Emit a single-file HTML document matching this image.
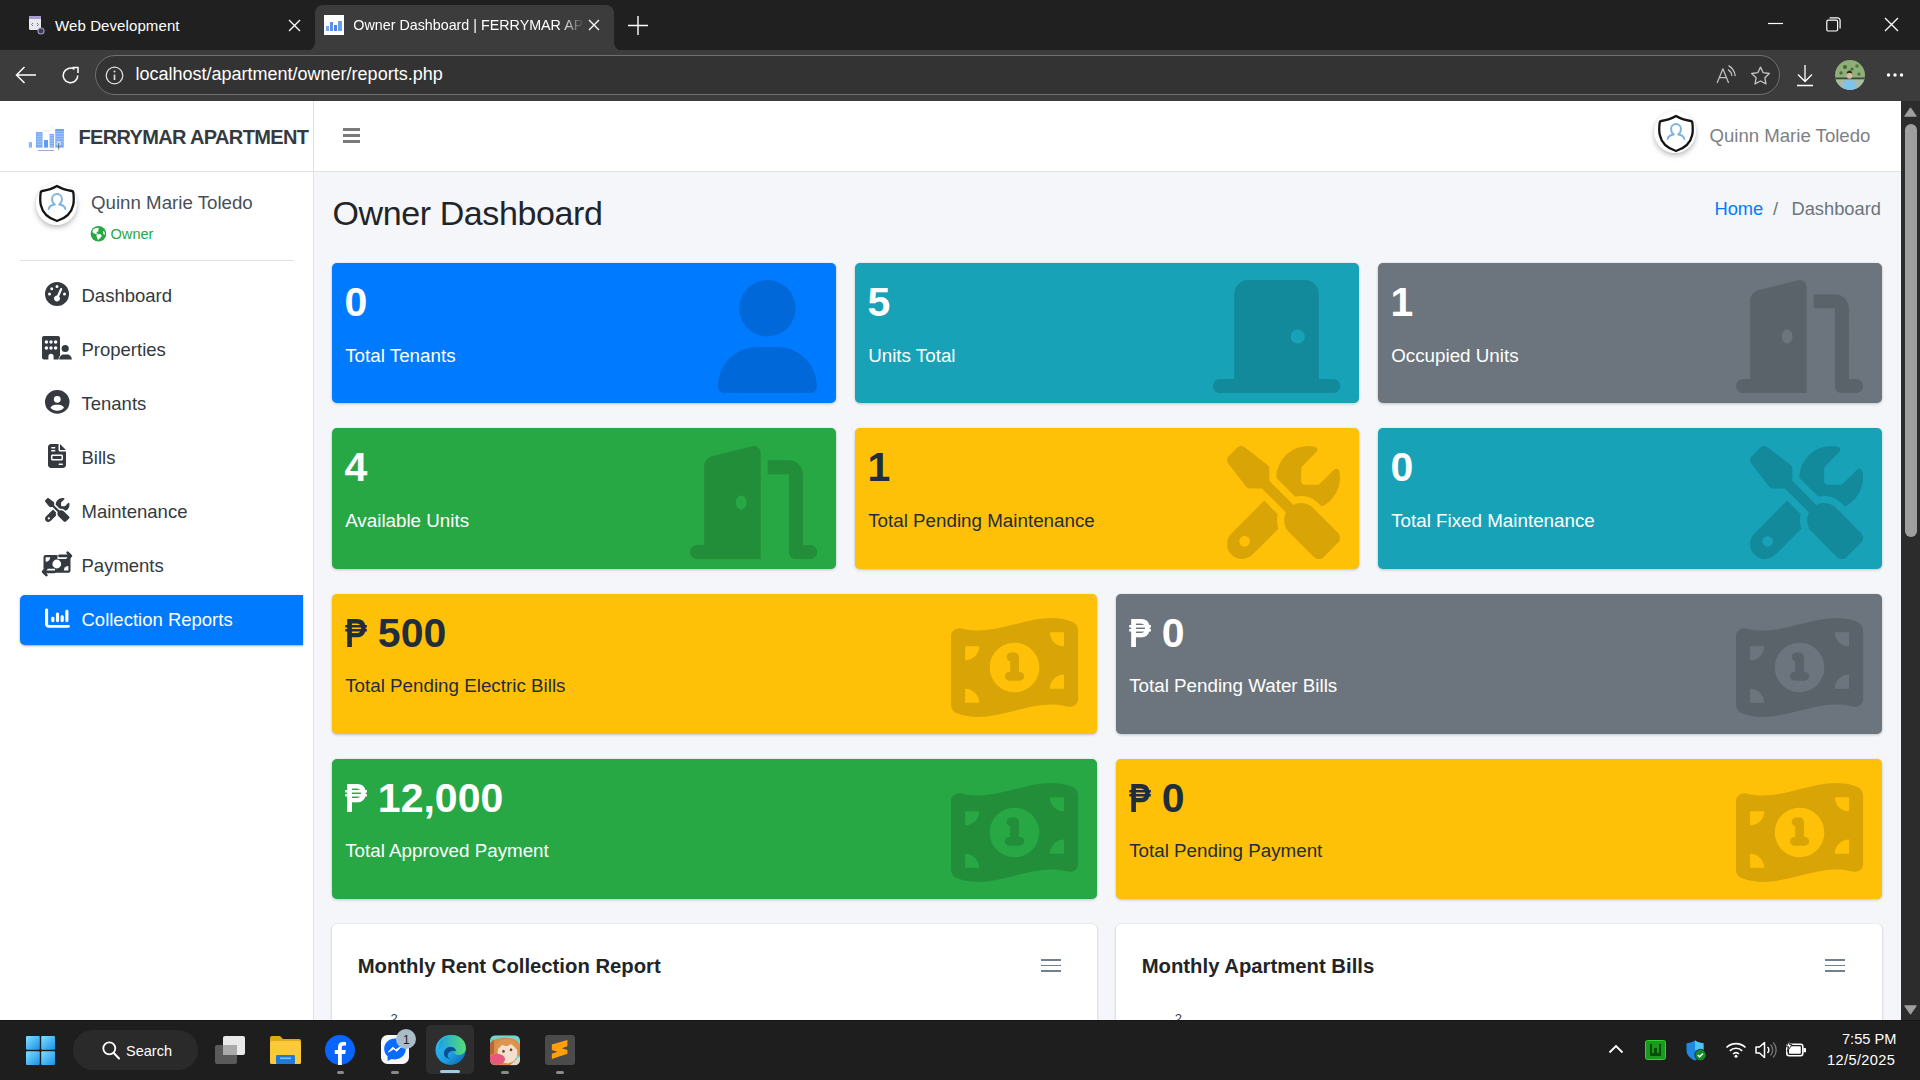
<!DOCTYPE html><html><head><meta charset="utf-8"><title>Owner Dashboard | FERRYMAR APARTMENT</title><style>
*{margin:0;padding:0;box-sizing:border-box}
html,body{width:1920px;height:1080px;overflow:hidden;background:#f4f6f9}
body{position:relative;font-family:"Liberation Sans",sans-serif}
.t{position:absolute;line-height:1;white-space:nowrap}
.ic{position:absolute;overflow:visible}
.peso{display:inline-block;transform:scaleX(.8);transform-origin:0 0;margin-right:-5.5px}
#tabstrip{position:absolute;left:0;top:0;width:1920px;height:50px;background:#202020}
#toolbar{position:absolute;left:0;top:50px;width:1920px;height:51px;background:#3c3c3c}
#acttab{position:absolute;left:315px;top:5px;width:299px;height:46px;background:#3c3c3c;border-radius:8px 8px 0 0}
#acttab:before,#acttab:after{content:"";position:absolute;bottom:0;width:8px;height:8px;background:radial-gradient(circle at 0 0,transparent 8px,#3c3c3c 8.5px)}
#acttab:before{left:-8px;background:radial-gradient(circle at 0 0,transparent 7.5px,#3c3c3c 8px)}
#acttab:after{right:-8px;background:radial-gradient(circle at 100% 0,transparent 7.5px,#3c3c3c 8px)}
#addr{position:absolute;left:95px;top:55px;width:1685px;height:40px;border-radius:20px;background:#333333;border:1px solid #707070}
#header{position:absolute;left:0;top:101px;width:1901px;height:71px;background:#fff;border-bottom:1px solid #dee2e6}
#sidebar{position:absolute;left:0;top:172px;width:314px;height:848px;background:#fff;border-right:1px solid #dee2e6}
#page{position:absolute;left:0;top:101px;width:1901px;height:919px;background:#f4f6f9}
.av{position:absolute;border-radius:50%;background:#fff;box-shadow:0 3px 6px rgba(0,0,0,.12),0 2px 4px rgba(0,0,0,.16)}
.box{position:absolute;border-radius:5px;box-shadow:0 0 1px rgba(0,0,0,.125),0 1px 3px rgba(0,0,0,.2)}
.card{position:absolute;border-radius:5px;background:#fff;box-shadow:0 0 1px rgba(0,0,0,.125),0 1px 3px rgba(0,0,0,.2)}
#sbar{position:absolute;left:1901px;top:101px;width:19px;height:919px;background:#2c2c2c}
#taskbar{position:absolute;left:0;top:1020px;width:1920px;height:60px;background:#1e1e1e;border-top:1px solid #171717}
</style></head><body><div id="tabstrip"></div>
<div id="toolbar"></div>
<div id="acttab"></div>
<svg class="ic" style="left:28px;top:15px;width:16px;height:20px" viewBox="0 0 16 20"><rect x="1" y="1" width="12" height="14" rx="1.5" fill="#e8e8ef"/><rect x="1" y="1" width="12" height="3" fill="#a79bd0"/><path d="M5 8l-1.5 1.5L5 11M9 8l1.5 1.5L9 11" stroke="#777" stroke-width="1" fill="none"/><circle cx="13" cy="16" r="3" fill="#3d3d50" stroke="#9a93c8" stroke-width="1.2"/></svg>
<div class="t" style="left:55.00px;top:17.80px;font-size:15px;color:#ffffff;letter-spacing:0.1px;">Web Development</div>
<svg class="ic" style="left:288px;top:19px;width:13px;height:13px" viewBox="0 0 13 13"><path d="M1 1L12 12M12 1L1 12" stroke="#fff" stroke-width="1.3"/></svg>
<div style="position:absolute;left:324px;top:15px;width:20px;height:20px;background:#fff"></div>
<svg class="ic" style="left:325px;top:18px;width:18px;height:14px" viewBox="0 0 18 14"><rect x="1" y="8" width="3" height="5" fill="#7aa7f0"/><rect x="5" y="4" width="3" height="9" fill="#5b90ec"/><rect x="9" y="7" width="3" height="6" fill="#4a86ea"/><rect x="13" y="3" width="4" height="10" fill="#6b9cef"/></svg>
<div class="t" style="left:353.3px;top:18.4px;font-size:14.3px;color:#fff;width:231px;overflow:hidden;-webkit-mask-image:linear-gradient(90deg,#000 0,#000 208px,transparent 231px);mask-image:linear-gradient(90deg,#000 0,#000 208px,transparent 231px)">Owner Dashboard | FERRYMAR APARTMENT</div>
<svg class="ic" style="left:588px;top:19px;width:12px;height:12px" viewBox="0 0 12 12"><path d="M1 1L11 11M11 1L1 11" stroke="#fff" stroke-width="1.3"/></svg>
<svg class="ic" style="left:628px;top:16px;width:20px;height:19px" viewBox="0 0 20 19"><path d="M10 0V19M0 9.5H20" stroke="#fff" stroke-width="1.4"/></svg>
<svg class="ic" style="left:1768px;top:22px;width:15px;height:3px" viewBox="0 0 15 3"><path d="M0 1.5H15" stroke="#fff" stroke-width="1.2"/></svg>
<svg class="ic" style="left:1826px;top:17px;width:15px;height:15px" viewBox="0 0 15 15"><rect x="0.8" y="3.2" width="10.8" height="10.8" rx="1.5" fill="none" stroke="#fff" stroke-width="1.2"/><path d="M3.5 0.8H11.5a2.6 2.6 0 0 1 2.6 2.6V11.5" fill="none" stroke="#fff" stroke-width="1.2"/></svg>
<svg class="ic" style="left:1884px;top:17px;width:15px;height:15px" viewBox="0 0 15 15"><path d="M1 1L14 14M14 1L1 14" stroke="#fff" stroke-width="1.3"/></svg>
<svg class="ic" style="left:15px;top:66px;width:22px;height:18px" viewBox="0 0 22 18"><path d="M21 9H1.5M9.5 1L1.5 9L9.5 17" fill="none" stroke="#fff" stroke-width="1.5"/></svg>
<svg class="ic" style="left:61px;top:66px;width:19px;height:19px" viewBox="0 0 19 19"><path d="M16.8 9.5A7.3 7.3 0 1 1 13.5 3.3" fill="none" stroke="#fff" stroke-width="1.5"/><path d="M11.5 1.5H17V7" fill="none" stroke="#fff" stroke-width="1.5"/></svg>
<div id="addr"></div>
<svg class="ic" style="left:105px;top:66px;width:19px;height:19px" viewBox="0 0 19 19"><circle cx="9.5" cy="9.5" r="8.3" fill="none" stroke="#ddd" stroke-width="1.3"/><path d="M9.5 8.5V14" stroke="#ddd" stroke-width="1.6"/><circle cx="9.5" cy="5.6" r="1" fill="#ddd"/></svg>
<div class="t" style="left:135.50px;top:65.46px;font-size:18px;color:#ffffff;">localhost/apartment/owner/reports.php</div>
<svg class="ic" style="left:1712px;top:62px;width:26px;height:24px" viewBox="1712 62 26 24"><path d="M1717.1 83L1722.9 68.8L1728.6 83M1719.3 77.6H1726.5" fill="none" stroke="#c2c2c2" stroke-width="1.25" stroke-linejoin="round"/><path d="M1728.4 69.9Q1731.2 71.6 1731.8 75.3M1728.9 65.9Q1734.2 69 1735.2 75.6" fill="none" stroke="#c2c2c2" stroke-width="1.25" stroke-linecap="round"/></svg>
<svg class="ic" style="left:1748px;top:64px;width:25px;height:23px" viewBox="1748 64 25 23"><path d="M1760.50 67.10 L1763.20 72.68 L1769.34 73.53 L1764.87 77.82 L1765.97 83.92 L1760.50 81.00 L1755.03 83.92 L1756.13 77.82 L1751.66 73.53 L1757.80 72.68z" fill="none" stroke="#c2c2c2" stroke-width="1.35" stroke-linejoin="round"/></svg>
<svg class="ic" style="left:1796px;top:64px;width:18px;height:23px" viewBox="0 0 18 23"><path d="M9 1V17M2 10.5L9 17.5L16 10.5M1 21.5H17" fill="none" stroke="#fff" stroke-width="1.3"/></svg>
<svg class="ic" style="left:1835px;top:60px;width:30px;height:30px" viewBox="0 0 30 30"><defs><clipPath id="pc"><circle cx="15" cy="15" r="15"/></clipPath></defs><g clip-path="url(#pc)"><rect width="30" height="30" fill="#8fae78"/><circle cx="10" cy="7" r="2" fill="#3f6a35"/><circle cx="17" cy="9" r="1.6" fill="#46703a"/><circle cx="22" cy="6" r="1.8" fill="#527a40"/><circle cx="6" cy="13" r="1.7" fill="#4a7040"/><circle cx="24" cy="14" r="1.6" fill="#4a7040"/><rect x="0" y="17.5" width="30" height="2" fill="#3b4a3c"/><rect x="0" y="19.5" width="30" height="11" fill="#a8bca8"/><path d="M7 30C7 23 10 20 14.5 20S22 23 22 30z" fill="#7fc3ea"/><ellipse cx="14.5" cy="15.5" rx="2.8" ry="3.2" fill="#d9b9a4"/><path d="M11.7 14C11.8 11.6 13 10.6 14.6 10.6S17.3 11.6 17.3 13.6C16.2 12.6 13.2 12.6 11.7 14z" fill="#3a2e28"/></g></svg>
<svg class="ic" style="left:1886px;top:72px;width:18px;height:6px" viewBox="0 0 18 6"><circle cx="2.5" cy="3" r="1.7" fill="#fff"/><circle cx="9" cy="3" r="1.7" fill="#fff"/><circle cx="15.5" cy="3" r="1.7" fill="#fff"/></svg>
<div id="page">
</div>
<div id="header"></div>
<div id="sidebar"></div>
<div style="position:absolute;left:313px;top:101px;width:1px;height:71px;background:#dee2e6"></div>
<svg class="ic" style="left:24px;top:126px;width:44px;height:28px" viewBox="0 0 44 28"><rect x="4.8" y="16.2" width="3.2" height="5.4" fill="#7fb0f7"/><rect x="5.6" y="17.40" width="1.6" height="1.1" fill="#a9cbfa"/><rect x="5.6" y="20.00" width="1.6" height="1.1" fill="#a9cbfa"/><rect x="12" y="6" width="6.5" height="15.6" fill="#78aaf6"/><rect x="12.8" y="7.20" width="4.9" height="1.1" fill="#a6c8fa"/><rect x="12.8" y="9.80" width="4.9" height="1.1" fill="#a6c8fa"/><rect x="12.8" y="12.40" width="4.9" height="1.1" fill="#a6c8fa"/><rect x="12.8" y="15.00" width="4.9" height="1.1" fill="#a6c8fa"/><rect x="12.8" y="17.60" width="4.9" height="1.1" fill="#a6c8fa"/><rect x="20" y="14" width="4" height="7.6" fill="#5c9ef7"/><rect x="25.6" y="7.9" width="4.4" height="13.7" fill="#7aabf6"/><rect x="26.400000000000002" y="9.10" width="2.8000000000000003" height="1.1" fill="#a8c9fa"/><rect x="26.400000000000002" y="11.70" width="2.8000000000000003" height="1.1" fill="#a8c9fa"/><rect x="26.400000000000002" y="14.30" width="2.8000000000000003" height="1.1" fill="#a8c9fa"/><rect x="26.400000000000002" y="16.90" width="2.8000000000000003" height="1.1" fill="#a8c9fa"/><rect x="26.400000000000002" y="19.50" width="2.8000000000000003" height="1.1" fill="#a8c9fa"/><rect x="31.3" y="3.3" width="8.5" height="18.3" fill="#76a8f6"/><rect x="32.1" y="4.50" width="6.9" height="1.1" fill="#a4c6fa"/><rect x="32.1" y="7.10" width="6.9" height="1.1" fill="#a4c6fa"/><rect x="32.1" y="9.70" width="6.9" height="1.1" fill="#a4c6fa"/><rect x="32.1" y="12.30" width="6.9" height="1.1" fill="#a4c6fa"/><rect x="32.1" y="14.90" width="6.9" height="1.1" fill="#a4c6fa"/><rect x="32.1" y="17.50" width="6.9" height="1.1" fill="#a4c6fa"/><rect x="31.3" y="3.3" width="8.5" height="1.4" fill="#5d97ee"/><circle cx="34.8" cy="17.5" r="2.2" fill="#cfe1fc"/><rect x="34.3" y="17" width="0.9" height="6.5" fill="#4a5a78"/><rect x="14" y="24" width="16" height="0.9" fill="#8da3c4"/><path d="M27 2.5L29.5 0.3" stroke="#ddd" stroke-width="0.6"/><rect x="19" y="4.3" width="7" height="1" fill="#e6e9ee"/></svg>
<div class="t" style="left:78.50px;top:127.27px;font-size:20px;color:#343a40;font-weight:700;letter-spacing:-0.65px;">FERRYMAR APARTMENT</div>
<div style="position:absolute;left:343px;top:128px;width:17px;height:2.5px;background:#7a7a7a"></div>
<div style="position:absolute;left:343px;top:134.2px;width:17px;height:2.5px;background:#7a7a7a"></div>
<div style="position:absolute;left:343px;top:140.4px;width:17px;height:2.5px;background:#7a7a7a"></div>
<div class="av" style="left:1654.3px;top:111px;width:42px;height:42px"></div><svg class="ic" style="left:1657.6px;top:114.8px;width:36px;height:37px" viewBox="0 0 36 37"><path d="M18 1C14 3.4 9.5 5 3.2 6Q1.6 6.3 1.6 8C1.2 12 0.8 16 1.8 20C3.5 28 10 33.5 18 36C26 33.5 32.5 28 34.2 20C35.2 16 34.8 12 34.4 8Q34.4 6.3 32.8 6C26.5 5 22 3.4 18 1z" fill="#fff" stroke="#141414" stroke-width="2.3" stroke-linejoin="round"/><path d="M9.6 24C10.4 21 12.5 19.8 15.8 19.5C13.8 18.2 13.1 16.2 13.1 13.9A4.9 4.9 0 0 1 22.9 13.9C22.9 16.2 22.2 18.2 20.2 19.5C23.5 19.8 25.6 21 26.4 24" fill="none" stroke="#7db4de" stroke-width="1.9" stroke-linecap="round" stroke-linejoin="round"/></svg>
<div class="t" style="left:1709.50px;top:127.05px;font-size:18.6px;color:#7d8185;">Quinn Marie Toledo</div>
<div class="av" style="left:35.8px;top:183px;width:41.5px;height:41.5px"></div><svg class="ic" style="left:39.099999999999994px;top:184.7px;width:36px;height:37px" viewBox="0 0 36 37"><path d="M18 1C14 3.4 9.5 5 3.2 6Q1.6 6.3 1.6 8C1.2 12 0.8 16 1.8 20C3.5 28 10 33.5 18 36C26 33.5 32.5 28 34.2 20C35.2 16 34.8 12 34.4 8Q34.4 6.3 32.8 6C26.5 5 22 3.4 18 1z" fill="#fff" stroke="#141414" stroke-width="2.3" stroke-linejoin="round"/><path d="M9.6 24C10.4 21 12.5 19.8 15.8 19.5C13.8 18.2 13.1 16.2 13.1 13.9A4.9 4.9 0 0 1 22.9 13.9C22.9 16.2 22.2 18.2 20.2 19.5C23.5 19.8 25.6 21 26.4 24" fill="none" stroke="#7db4de" stroke-width="1.9" stroke-linecap="round" stroke-linejoin="round"/></svg>
<div class="t" style="left:91.00px;top:194.17px;font-size:18.7px;color:#495057;">Quinn Marie Toledo</div>
<svg class="ic" style="left:86px;top:222px;width:24px;height:24px" viewBox="0 0 1080 1080"><circle cx="560" cy="532" r="350" fill="#28a745"/><path d="M290 450L320 340L440 265L580 255L555 330L560 420L460 460L540 520L420 545L330 500z" fill="#fff"/><path d="M470 560L640 540L700 600L690 680L610 745L565 800L520 780L490 690L470 620z" fill="#fff"/><ellipse cx="805" cy="490" rx="38" ry="90" transform="rotate(-12 805 490)" fill="#fff"/></svg>
<div class="t" style="left:110.50px;top:227.44px;font-size:14.6px;color:#28a745;">Owner</div>
<div style="position:absolute;left:20px;top:260px;width:274px;height:1px;background:#dee2e6"></div>
<svg class="ic" style="left:45.00px;top:282.00px;width:24.00px;height:24.00px;" viewBox="0 0 512 512" fill="#343a40" color="#343a40" preserveAspectRatio="none"><path d="M0 256a256 256 0 1 1 512 0A256 256 0 1 1 0 256zM288 96a32 32 0 1 0 -64 0 32 32 0 1 0 64 0zM256 416c35.3 0 64-28.7 64-64c0-17.4-6.9-33.1-18.1-44.6L366 161.7c5.3-12.1-.2-26.3-12.3-31.6s-26.3 .2-31.6 12.3L257.9 288c-.6 0-1.3 0-1.9 0c-35.3 0-64 28.7-64 64s28.7 64 64 64zM176 144a32 32 0 1 0 -64 0 32 32 0 1 0 64 0zM96 288a32 32 0 1 0 0-64 32 32 0 1 0 0 64zm352-32a32 32 0 1 0 -64 0 32 32 0 1 0 64 0z"/></svg>
<div class="t" style="left:81.50px;top:287.14px;font-size:18.5px;color:#343a40;">Dashboard</div>
<svg class="ic" style="left:42.00px;top:336.00px;width:30.00px;height:24.00px;" viewBox="0 0 30 24" fill="#343a40" color="#343a40" preserveAspectRatio="none"><path fill-rule="evenodd" d="M2 0H16a2 2 0 0 1 2 2V23.6H11.6V20.3a2.6 2.6 0 0 0-5.2 0V23.6H2a2 2 0 0 1-2-2V2a2 2 0 0 1 2-2z"/><g fill="#fff"><circle cx="4.4" cy="5.9" r="1.75"/><circle cx="9" cy="5.9" r="1.75"/><circle cx="13.6" cy="5.9" r="1.75"/><circle cx="4.4" cy="12" r="1.75"/><circle cx="9" cy="12" r="1.75"/><circle cx="13.6" cy="12" r="1.75"/></g><path d="M16.5 24C16.5 20.5 18.8 17.8 22 17.8H25C28.2 17.8 30.5 20.5 30.5 24z" fill="#fff"/><circle cx="23.2" cy="12.5" r="3.6"/><path d="M17.2 23.6C17.2 20.6 19.2 18.5 22.2 18.5H24.8C27.8 18.5 29.8 20.6 29.8 23.6z"/></svg>
<div class="t" style="left:81.50px;top:341.14px;font-size:18.5px;color:#343a40;">Properties</div>
<svg class="ic" style="left:44.80px;top:390.00px;width:24.50px;height:23.80px;" viewBox="0 0 512 512" fill="#343a40" color="#343a40" preserveAspectRatio="none"><path d="M399 384.2C376.9 345.8 335.4 320 288 320H224c-47.4 0-88.9 25.8-111 64.2c35.2 39.2 86.2 63.8 143 63.8s107.8-24.7 143-63.8zM0 256a256 256 0 1 1 512 0A256 256 0 1 1 0 256zm256 16a72 72 0 1 0 0-144 72 72 0 1 0 0 144z"/></svg>
<div class="t" style="left:81.50px;top:395.14px;font-size:18.5px;color:#343a40;">Tenants</div>
<svg class="ic" style="left:48.00px;top:444.00px;width:18.00px;height:24.00px;" viewBox="0 0 384 512" fill="#343a40" color="#343a40" preserveAspectRatio="none"><path d="M64 0C28.7 0 0 28.7 0 64V448c0 35.3 28.7 64 64 64H320c35.3 0 64-28.7 64-64V160H256c-17.7 0-32-14.3-32-32V0H64zM256 0V128H384L256 0zM80 64h64c8.8 0 16 7.2 16 16s-7.2 16-16 16H80c-8.8 0-16-7.2-16-16s7.2-16 16-16zm0 64h64c8.8 0 16 7.2 16 16s-7.2 16-16 16H80c-8.8 0-16-7.2-16-16s7.2-16 16-16zm16 96H288c17.7 0 32 14.3 32 32v64c0 17.7-14.3 32-32 32H96c-17.7 0-32-14.3-32-32V256c0-17.7 14.3-32 32-32zm0 32v64H288V256H96zM240 416h64c8.8 0 16 7.2 16 16s-7.2 16-16 16H240c-8.8 0-16-7.2-16-16s7.2-16 16-16z"/></svg>
<div class="t" style="left:81.50px;top:449.14px;font-size:18.5px;color:#343a40;">Bills</div>
<svg class="ic" style="left:44.80px;top:498.00px;width:24.50px;height:24.00px;" viewBox="0 0 512 512" fill="#343a40" color="#343a40" preserveAspectRatio="none"><path d="M78.6 5C69.1-2.4 55.6-1.5 47 7L7 47c-8.5 8.5-9.4 22-2.1 31.6l80 104c4.5 5.9 11.6 9.4 19 9.4h54.1l109 109c-14.7 29-10 65.4 14.3 89.6l112 112c12.5 12.5 32.8 12.5 45.3 0l64-64c12.5-12.5 12.5-32.8 0-45.3l-112-112c-24.2-24.2-60.6-29-89.6-14.3l-109-109V104c0-7.5-3.5-14.5-9.4-19L78.6 5zM19.9 396.1C7.2 408.8 0 426.1 0 444.1C0 481.6 30.4 512 67.9 512c18 0 35.3-7.2 48-19.9L233.7 374.3c-7.8-20.9-9-43.6-3.6-65.1l-61.7-61.7L19.9 396.1zM512 144c0-10.5-1.1-20.7-3.2-30.5c-2.4-11.2-16.1-14.1-24.2-6l-63.9 63.9c-3 3-7.1 4.7-11.3 4.7H352c-8.8 0-16-7.2-16-16V102.6c0-4.2 1.7-8.3 4.7-11.3l63.9-63.9c8.1-8.1 5.2-21.8-6-24.2C388.7 1.1 378.5 0 368 0C288.5 0 224 64.5 224 144l0 .8 85.3 85.3c36-9.1 75.8 .5 104 28.7L429 274.5c49-23 83-72.8 83-130.5zM56 432a24 24 0 1 1 48 0 24 24 0 1 1 -48 0z"/></svg>
<div class="t" style="left:81.50px;top:503.14px;font-size:18.5px;color:#343a40;">Maintenance</div>
<svg class="ic" style="left:42.00px;top:552.00px;width:30.00px;height:24.00px;" viewBox="0 0 30 24" fill="#343a40" color="#343a40" preserveAspectRatio="none"><path d="M3.5 3H26.5a2 2 0 0 1 2 2V18.7a2 2 0 0 1-2 2H3.5a2 2 0 0 1-2-2V5a2 2 0 0 1 2-2z"/><g fill="#fff"><circle cx="14.8" cy="12" r="4.4"/><path d="M3.6 5.2H8.2A4.6 4.6 0 0 1 3.6 9.8z"/><path d="M26.4 18.5H21.8A4.6 4.6 0 0 1 26.4 13.9z"/></g><path d="M15.5 3.9H27M13 19.8H2" stroke="#fff" stroke-width="6"/><path d="M17.5 3.9H27.5M25.6 0.6L28.9 3.9L25.6 7.2M12.5 19.8H2.5M4.4 16.5L1.1 19.8L4.4 23.1" fill="none" stroke="currentColor" stroke-width="2.7" stroke-linecap="round" stroke-linejoin="round"/></svg>
<div class="t" style="left:81.50px;top:557.14px;font-size:18.5px;color:#343a40;">Payments</div>
<div style="position:absolute;left:20px;top:595px;width:283px;height:50px;background:#007bff;border-radius:5px 0 0 5px;box-shadow:0 1px 3px rgba(0,0,0,.12),0 1px 2px rgba(0,0,0,.24)"></div>
<svg class="ic" style="left:44.50px;top:607.00px;width:25.00px;height:22.00px;" viewBox="0 0 512 512" fill="#ffffff" color="#ffffff" preserveAspectRatio="none"><path d="M32 32c17.7 0 32 14.3 32 32V400c0 8.8 7.2 16 16 16H480c17.7 0 32 14.3 32 32s-14.3 32-32 32H80c-44.2 0-80-35.8-80-80V64C0 46.3 14.3 32 32 32zM160 224c17.7 0 32 14.3 32 32v64c0 17.7-14.3 32-32 32s-32-14.3-32-32V256c0-17.7 14.3-32 32-32zm128-64V320c0 17.7-14.3 32-32 32s-32-14.3-32-32V160c0-17.7 14.3-32 32-32s32 14.3 32 32zm64 32c17.7 0 32 14.3 32 32v96c0 17.7-14.3 32-32 32s-32-14.3-32-32V224c0-17.7 14.3-32 32-32zM480 96V320c0 17.7-14.3 32-32 32s-32-14.3-32-32V96c0-17.7 14.3-32 32-32s32 14.3 32 32z"/></svg>
<div class="t" style="left:81.50px;top:611.14px;font-size:18.5px;color:#ffffff;">Collection Reports</div>
<div class="t" style="left:332.50px;top:196.01px;font-size:34px;color:#212529;letter-spacing:-0.4px;">Owner Dashboard</div>
<div class="t" style="left:1714.50px;top:200.01px;font-size:18.3px;color:#007bff;">Home</div>
<div class="t" style="left:1773.00px;top:200.01px;font-size:18.3px;color:#6c757d;">/</div>
<div class="t" style="left:1791.50px;top:200.01px;font-size:18.3px;color:#6c757d;">Dashboard</div>
<div class="box" style="left:332px;top:263.0px;width:504px;height:140.3px;background:#007bff"></div>
<svg class="ic" style="left:718.38px;top:280.40px;width:98.88px;height:113.00px;" viewBox="0 0 448 512" fill="rgba(0,0,0,.15)" color="rgba(0,0,0,.15)" preserveAspectRatio="none"><path d="M224 256A128 128 0 1 0 224 0a128 128 0 1 0 0 256zm-45.7 48C79.8 304 0 383.8 0 482.3C0 498.7 13.3 512 29.7 512H418.3c16.4 0 29.7-13.3 29.7-29.7C448 383.8 368.2 304 269.7 304H178.3z"/></svg>
<div class="t" style="left:344.60px;top:282.09px;font-size:41px;color:#ffffff;font-weight:700;">0</div>
<div class="t" style="left:345.20px;top:346.58px;font-size:18.8px;color:#ffffff;">Total Tenants</div>
<div class="box" style="left:855px;top:263.0px;width:504px;height:140.3px;background:#17a2b8"></div>
<svg class="ic" style="left:1213.12px;top:280.40px;width:127.12px;height:113.00px;" viewBox="0 0 576 512" fill="rgba(0,0,0,.15)" color="rgba(0,0,0,.15)" preserveAspectRatio="none"><path d="M96 64c0-35.3 28.7-64 64-64H416c35.3 0 64 28.7 64 64V448h64c17.7 0 32 14.3 32 32s-14.3 32-32 32H432 144 32c-17.7 0-32-14.3-32-32s14.3-32 32-32H96V64zM384 288a32 32 0 1 0 0-64 32 32 0 1 0 0 64z"/></svg>
<div class="t" style="left:867.60px;top:282.09px;font-size:41px;color:#ffffff;font-weight:700;">5</div>
<div class="t" style="left:868.20px;top:346.58px;font-size:18.8px;color:#ffffff;">Units Total</div>
<div class="box" style="left:1378px;top:263.0px;width:504px;height:140.3px;background:#6c757d"></div>
<svg class="ic" style="left:1736.12px;top:280.40px;width:127.12px;height:113.00px;" viewBox="0 0 576 512" fill="rgba(0,0,0,.15)" color="rgba(0,0,0,.15)" preserveAspectRatio="none"><path d="M320 32c0-9.9-4.5-19.2-12.3-25.2S289.8-1.4 280.2 1l-179.9 45C79 51.3 64 70.5 64 92.5V448H32c-17.7 0-32 14.3-32 32s14.3 32 32 32H96 288h32V480 32zM256 256c0 17.7-10.7 32-24 32s-24-14.3-24-32s10.7-32 24-32s24 14.3 24 32zm96-128h96V480c0 17.7 14.3 32 32 32h64c17.7 0 32-14.3 32-32s-14.3-32-32-32H512V128c0-35.3-28.7-64-64-64H352v64z"/></svg>
<div class="t" style="left:1390.60px;top:282.09px;font-size:41px;color:#ffffff;font-weight:700;">1</div>
<div class="t" style="left:1391.20px;top:346.58px;font-size:18.8px;color:#ffffff;">Occupied Units</div>
<div class="box" style="left:332px;top:428.3px;width:504px;height:140.3px;background:#28a745"></div>
<svg class="ic" style="left:690.12px;top:445.70px;width:127.12px;height:113.00px;" viewBox="0 0 576 512" fill="rgba(0,0,0,.15)" color="rgba(0,0,0,.15)" preserveAspectRatio="none"><path d="M320 32c0-9.9-4.5-19.2-12.3-25.2S289.8-1.4 280.2 1l-179.9 45C79 51.3 64 70.5 64 92.5V448H32c-17.7 0-32 14.3-32 32s14.3 32 32 32H96 288h32V480 32zM256 256c0 17.7-10.7 32-24 32s-24-14.3-24-32s10.7-32 24-32s24 14.3 24 32zm96-128h96V480c0 17.7 14.3 32 32 32h64c17.7 0 32-14.3 32-32s-14.3-32-32-32H512V128c0-35.3-28.7-64-64-64H352v64z"/></svg>
<div class="t" style="left:344.60px;top:447.39px;font-size:41px;color:#ffffff;font-weight:700;">4</div>
<div class="t" style="left:345.20px;top:511.88px;font-size:18.8px;color:#ffffff;">Available Units</div>
<div class="box" style="left:855px;top:428.3px;width:504px;height:140.3px;background:#ffc107"></div>
<svg class="ic" style="left:1227.25px;top:445.70px;width:113.00px;height:113.00px;" viewBox="0 0 512 512" fill="rgba(0,0,0,.15)" color="rgba(0,0,0,.15)" preserveAspectRatio="none"><path d="M78.6 5C69.1-2.4 55.6-1.5 47 7L7 47c-8.5 8.5-9.4 22-2.1 31.6l80 104c4.5 5.9 11.6 9.4 19 9.4h54.1l109 109c-14.7 29-10 65.4 14.3 89.6l112 112c12.5 12.5 32.8 12.5 45.3 0l64-64c12.5-12.5 12.5-32.8 0-45.3l-112-112c-24.2-24.2-60.6-29-89.6-14.3l-109-109V104c0-7.5-3.5-14.5-9.4-19L78.6 5zM19.9 396.1C7.2 408.8 0 426.1 0 444.1C0 481.6 30.4 512 67.9 512c18 0 35.3-7.2 48-19.9L233.7 374.3c-7.8-20.9-9-43.6-3.6-65.1l-61.7-61.7L19.9 396.1zM512 144c0-10.5-1.1-20.7-3.2-30.5c-2.4-11.2-16.1-14.1-24.2-6l-63.9 63.9c-3 3-7.1 4.7-11.3 4.7H352c-8.8 0-16-7.2-16-16V102.6c0-4.2 1.7-8.3 4.7-11.3l63.9-63.9c8.1-8.1 5.2-21.8-6-24.2C388.7 1.1 378.5 0 368 0C288.5 0 224 64.5 224 144l0 .8 85.3 85.3c36-9.1 75.8 .5 104 28.7L429 274.5c49-23 83-72.8 83-130.5zM56 432a24 24 0 1 1 48 0 24 24 0 1 1 -48 0z"/></svg>
<div class="t" style="left:867.60px;top:447.39px;font-size:41px;color:#1f2d3d;font-weight:700;">1</div>
<div class="t" style="left:868.20px;top:511.88px;font-size:18.8px;color:#1f2d3d;">Total Pending Maintenance</div>
<div class="box" style="left:1378px;top:428.3px;width:504px;height:140.3px;background:#17a2b8"></div>
<svg class="ic" style="left:1750.25px;top:445.70px;width:113.00px;height:113.00px;" viewBox="0 0 512 512" fill="rgba(0,0,0,.15)" color="rgba(0,0,0,.15)" preserveAspectRatio="none"><path d="M78.6 5C69.1-2.4 55.6-1.5 47 7L7 47c-8.5 8.5-9.4 22-2.1 31.6l80 104c4.5 5.9 11.6 9.4 19 9.4h54.1l109 109c-14.7 29-10 65.4 14.3 89.6l112 112c12.5 12.5 32.8 12.5 45.3 0l64-64c12.5-12.5 12.5-32.8 0-45.3l-112-112c-24.2-24.2-60.6-29-89.6-14.3l-109-109V104c0-7.5-3.5-14.5-9.4-19L78.6 5zM19.9 396.1C7.2 408.8 0 426.1 0 444.1C0 481.6 30.4 512 67.9 512c18 0 35.3-7.2 48-19.9L233.7 374.3c-7.8-20.9-9-43.6-3.6-65.1l-61.7-61.7L19.9 396.1zM512 144c0-10.5-1.1-20.7-3.2-30.5c-2.4-11.2-16.1-14.1-24.2-6l-63.9 63.9c-3 3-7.1 4.7-11.3 4.7H352c-8.8 0-16-7.2-16-16V102.6c0-4.2 1.7-8.3 4.7-11.3l63.9-63.9c8.1-8.1 5.2-21.8-6-24.2C388.7 1.1 378.5 0 368 0C288.5 0 224 64.5 224 144l0 .8 85.3 85.3c36-9.1 75.8 .5 104 28.7L429 274.5c49-23 83-72.8 83-130.5zM56 432a24 24 0 1 1 48 0 24 24 0 1 1 -48 0z"/></svg>
<div class="t" style="left:1390.60px;top:447.39px;font-size:41px;color:#ffffff;font-weight:700;">0</div>
<div class="t" style="left:1391.20px;top:511.88px;font-size:18.8px;color:#ffffff;">Total Fixed Maintenance</div>
<div class="box" style="left:332px;top:593.6px;width:765px;height:140.3px;background:#ffc107"></div>
<svg class="ic" style="left:951.12px;top:611.00px;width:127.12px;height:113.00px;" viewBox="0 0 576 512" fill="rgba(0,0,0,.15)" color="rgba(0,0,0,.15)" preserveAspectRatio="none"><path fill-rule="evenodd" d="M0 112.5V422.3c0 18 10.1 35 27 41.3c87 32.5 174 10.3 261-11.9c79.8-20.3 159.6-40.7 239.3-18.9c23 6.3 48.7-9.5 48.7-33.4V89.7c0-18-10.1-35-27-41.3C462 15.9 375 38.1 288 60.3C208.2 80.6 128.4 100.9 48.7 79.1C25.6 72.8 0 88.6 0 112.5zM128 416H64V352c35.3 0 64 28.7 64 64zM64 224V160h64c0 35.3-28.7 64-64 64zM448 352c0-35.3 28.7-64 64-64v64H448zm64-192c-35.3 0-64-28.7-64-64h64v64zM400 256c0 61.9-50.1 112-112 112s-112-50.1-112-112s50.1-112 112-112s112 50.1 112 112zM252 208c0 9.7 6.9 17.7 16 19.6V276h-4c-11 0-20 9-20 20s9 20 20 20h24 24c11 0 20-9 20-20s-9-20-20-20h-4V208c0-11-9-20-20-20H272c-11 0-20 9-20 20z"/></svg>
<div class="t" style="left:344.60px;top:612.69px;font-size:41px;color:#1f2d3d;font-weight:700;"><span class="peso">&#8369;</span> 500</div>
<div class="t" style="left:345.20px;top:677.18px;font-size:18.8px;color:#1f2d3d;">Total Pending Electric Bills</div>
<div class="box" style="left:1116px;top:593.6px;width:766px;height:140.3px;background:#6c757d"></div>
<svg class="ic" style="left:1736.12px;top:611.00px;width:127.12px;height:113.00px;" viewBox="0 0 576 512" fill="rgba(0,0,0,.15)" color="rgba(0,0,0,.15)" preserveAspectRatio="none"><path fill-rule="evenodd" d="M0 112.5V422.3c0 18 10.1 35 27 41.3c87 32.5 174 10.3 261-11.9c79.8-20.3 159.6-40.7 239.3-18.9c23 6.3 48.7-9.5 48.7-33.4V89.7c0-18-10.1-35-27-41.3C462 15.9 375 38.1 288 60.3C208.2 80.6 128.4 100.9 48.7 79.1C25.6 72.8 0 88.6 0 112.5zM128 416H64V352c35.3 0 64 28.7 64 64zM64 224V160h64c0 35.3-28.7 64-64 64zM448 352c0-35.3 28.7-64 64-64v64H448zm64-192c-35.3 0-64-28.7-64-64h64v64zM400 256c0 61.9-50.1 112-112 112s-112-50.1-112-112s50.1-112 112-112s112 50.1 112 112zM252 208c0 9.7 6.9 17.7 16 19.6V276h-4c-11 0-20 9-20 20s9 20 20 20h24 24c11 0 20-9 20-20s-9-20-20-20h-4V208c0-11-9-20-20-20H272c-11 0-20 9-20 20z"/></svg>
<div class="t" style="left:1128.60px;top:612.69px;font-size:41px;color:#ffffff;font-weight:700;"><span class="peso">&#8369;</span> 0</div>
<div class="t" style="left:1129.20px;top:677.18px;font-size:18.8px;color:#ffffff;">Total Pending Water Bills</div>
<div class="box" style="left:332px;top:758.9px;width:765px;height:140.3px;background:#28a745"></div>
<svg class="ic" style="left:951.12px;top:776.30px;width:127.12px;height:113.00px;" viewBox="0 0 576 512" fill="rgba(0,0,0,.15)" color="rgba(0,0,0,.15)" preserveAspectRatio="none"><path fill-rule="evenodd" d="M0 112.5V422.3c0 18 10.1 35 27 41.3c87 32.5 174 10.3 261-11.9c79.8-20.3 159.6-40.7 239.3-18.9c23 6.3 48.7-9.5 48.7-33.4V89.7c0-18-10.1-35-27-41.3C462 15.9 375 38.1 288 60.3C208.2 80.6 128.4 100.9 48.7 79.1C25.6 72.8 0 88.6 0 112.5zM128 416H64V352c35.3 0 64 28.7 64 64zM64 224V160h64c0 35.3-28.7 64-64 64zM448 352c0-35.3 28.7-64 64-64v64H448zm64-192c-35.3 0-64-28.7-64-64h64v64zM400 256c0 61.9-50.1 112-112 112s-112-50.1-112-112s50.1-112 112-112s112 50.1 112 112zM252 208c0 9.7 6.9 17.7 16 19.6V276h-4c-11 0-20 9-20 20s9 20 20 20h24 24c11 0 20-9 20-20s-9-20-20-20h-4V208c0-11-9-20-20-20H272c-11 0-20 9-20 20z"/></svg>
<div class="t" style="left:344.60px;top:777.99px;font-size:41px;color:#ffffff;font-weight:700;"><span class="peso">&#8369;</span> 12,000</div>
<div class="t" style="left:345.20px;top:842.48px;font-size:18.8px;color:#ffffff;">Total Approved Payment</div>
<div class="box" style="left:1116px;top:758.9px;width:766px;height:140.3px;background:#ffc107"></div>
<svg class="ic" style="left:1736.12px;top:776.30px;width:127.12px;height:113.00px;" viewBox="0 0 576 512" fill="rgba(0,0,0,.15)" color="rgba(0,0,0,.15)" preserveAspectRatio="none"><path fill-rule="evenodd" d="M0 112.5V422.3c0 18 10.1 35 27 41.3c87 32.5 174 10.3 261-11.9c79.8-20.3 159.6-40.7 239.3-18.9c23 6.3 48.7-9.5 48.7-33.4V89.7c0-18-10.1-35-27-41.3C462 15.9 375 38.1 288 60.3C208.2 80.6 128.4 100.9 48.7 79.1C25.6 72.8 0 88.6 0 112.5zM128 416H64V352c35.3 0 64 28.7 64 64zM64 224V160h64c0 35.3-28.7 64-64 64zM448 352c0-35.3 28.7-64 64-64v64H448zm64-192c-35.3 0-64-28.7-64-64h64v64zM400 256c0 61.9-50.1 112-112 112s-112-50.1-112-112s50.1-112 112-112s112 50.1 112 112zM252 208c0 9.7 6.9 17.7 16 19.6V276h-4c-11 0-20 9-20 20s9 20 20 20h24 24c11 0 20-9 20-20s-9-20-20-20h-4V208c0-11-9-20-20-20H272c-11 0-20 9-20 20z"/></svg>
<div class="t" style="left:1128.60px;top:777.99px;font-size:41px;color:#1f2d3d;font-weight:700;"><span class="peso">&#8369;</span> 0</div>
<div class="t" style="left:1129.20px;top:842.48px;font-size:18.8px;color:#1f2d3d;">Total Pending Payment</div>
<div class="card" style="left:332px;top:923.5px;width:765px;height:300px"></div>
<div class="t" style="left:357.70px;top:955.61px;font-size:20.3px;color:#212529;font-weight:700;">Monthly Rent Collection Report</div>
<div style="position:absolute;left:1041px;top:959.2px;width:19.5px;height:1.7px;background:#6e8192"></div>
<div style="position:absolute;left:1041px;top:964.7px;width:19.5px;height:1.7px;background:#6e8192"></div>
<div style="position:absolute;left:1041px;top:970.2px;width:19.5px;height:1.7px;background:#6e8192"></div>
<div class="t" style="left:390.50px;top:1012.49px;font-size:13px;color:#373d3f;">2</div>
<div class="card" style="left:1116px;top:923.5px;width:766px;height:300px"></div>
<div class="t" style="left:1141.70px;top:955.61px;font-size:20.3px;color:#212529;font-weight:700;">Monthly Apartment Bills</div>
<div style="position:absolute;left:1825px;top:959.2px;width:19.5px;height:1.7px;background:#6e8192"></div>
<div style="position:absolute;left:1825px;top:964.7px;width:19.5px;height:1.7px;background:#6e8192"></div>
<div style="position:absolute;left:1825px;top:970.2px;width:19.5px;height:1.7px;background:#6e8192"></div>
<div class="t" style="left:1174.70px;top:1012.49px;font-size:13px;color:#373d3f;">2</div>
<div id="sbar"></div>
<svg class="ic" style="left:1904px;top:107px;width:13px;height:10px" viewBox="0 0 13 10"><path d="M6.5 0.8L12.3 9.2H0.7z" fill="#9f9f9f" stroke="#9f9f9f" stroke-width="1" stroke-linejoin="round"/></svg>
<div style="position:absolute;left:1905px;top:124px;width:11.5px;height:413px;border-radius:6px;background:#9f9f9f"></div>
<svg class="ic" style="left:1904px;top:1005px;width:13px;height:10px" viewBox="0 0 13 10"><path d="M6.5 9.2L12.3 0.8H0.7z" fill="#9f9f9f" stroke="#9f9f9f" stroke-width="1" stroke-linejoin="round"/></svg>
<div id="taskbar"></div>
<svg class="ic" style="left:26px;top:1036px;width:29px;height:29px" viewBox="0 0 29 29"><defs><linearGradient id="wg" x1="0" y1="0" x2="1" y2="1"><stop offset="0" stop-color="#7fe0ff"/><stop offset="1" stop-color="#1a8fe8"/></linearGradient></defs><rect x="0" y="0" width="13.8" height="13.8" rx="1" fill="url(#wg)"/><rect x="15.2" y="0" width="13.8" height="13.8" rx="1" fill="url(#wg)"/><rect x="0" y="15.2" width="13.8" height="13.8" rx="1" fill="url(#wg)"/><rect x="15.2" y="15.2" width="13.8" height="13.8" rx="1" fill="url(#wg)"/></svg>
<div style="position:absolute;left:73px;top:1030px;width:125px;height:40px;border-radius:20px;background:#2a2a2a"></div>
<svg class="ic" style="left:102px;top:1041px;width:18px;height:19px" viewBox="0 0 18 19"><circle cx="7.3" cy="7.3" r="6" fill="none" stroke="#fff" stroke-width="1.8"/><path d="M11.5 11.8L17 17.5" stroke="#fff" stroke-width="2" stroke-linecap="round"/></svg>
<div class="t" style="left:126.00px;top:1043.52px;font-size:14.5px;color:#ffffff;">Search</div>
<svg class="ic" style="left:215px;top:1036px;width:30px;height:28px" viewBox="0 0 30 28"><rect x="0" y="9" width="22" height="19" rx="2" fill="#5a5a5a"/><rect x="8" y="0" width="22" height="19" rx="2" fill="#e9e9e9"/><rect x="8" y="9" width="14" height="10" fill="#aaa"/></svg>
<svg class="ic" style="left:270px;top:1036px;width:31px;height:28px" viewBox="0 0 31 28"><path d="M0 2a2 2 0 0 1 2-2h8l3 3h16a2 2 0 0 1 2 2V6H0z" fill="#e0a81c"/><rect x="0" y="5" width="31" height="23" rx="1.5" fill="#fbc93a"/><rect x="6" y="19" width="19" height="9" rx="1" fill="#1f7ad8"/><rect x="10" y="21.5" width="11" height="1.6" fill="#7fc2ff"/></svg>
<svg class="ic" style="left:325px;top:1035px;width:30px;height:30px" viewBox="0 0 30 30"><circle cx="15" cy="15" r="15" fill="#0866ff"/><path d="M16.8 30V19h3.4l.6-4h-4v-2.3c0-1.2.5-2.1 2.2-2.1H21V7.2c-.5-.1-1.8-.3-3-.3-3.2 0-5 1.8-5 5.3V15H9.8v4H13v11z" fill="#fff"/></svg>
<svg class="ic" style="left:381px;top:1035px;width:28px;height:29px" viewBox="0 0 28 29"><rect x="0" y="0" width="28" height="29" rx="6.5" fill="#f8f8f8"/><path d="M14 3.5C8 3.5 3.2 8 3.2 13.8c0 3 1.3 5.6 3.4 7.4V26l3.9-2.1c1.1.3 2.3.5 3.5.5 6 0 10.8-4.5 10.8-10.3S20 3.5 14 3.5z" fill="#0a6cff"/><path d="M7.5 17L11.8 12.3L14.8 14.8L20.3 11.3L15.8 16.3L12.8 13.8z" fill="#fff" stroke="#fff" stroke-width="1" stroke-linejoin="round"/></svg>
<div style="position:absolute;left:396px;top:1029px;width:20px;height:20px;border-radius:50%;background:#a9bcc8;border:0 solid #1c1c1c"></div>
<div class="t" style="left:403.00px;top:1033.84px;font-size:12px;color:#1c1c1c;">1</div>
<div style="position:absolute;left:426px;top:1025px;width:48px;height:49px;border-radius:5px;background:#2e2e2e"></div>
<svg class="ic" style="left:435px;top:1034px;width:31px;height:32px" viewBox="0 0 31 32"><defs><linearGradient id="eg1" x1="0" y1="0" x2="1" y2="1"><stop offset="0" stop-color="#35c1f1"/><stop offset="0.6" stop-color="#1b9de2"/><stop offset="1" stop-color="#0c59a4"/></linearGradient><linearGradient id="eg2" x1="0" y1="0" x2="1" y2="0"><stop offset="0" stop-color="#1ba1e2"/><stop offset="1" stop-color="#54e071"/></linearGradient></defs><circle cx="15.5" cy="16" r="15" fill="url(#eg1)"/><path d="M4 11C6 4 12 1 17 1c8 0 14 6 14 13 0 4-3 7-7 7-3 0-5-1.5-5-3.5 0-3-3-5.5-7-5.5-3.5 0-6.5 1.5-8 4z" fill="url(#eg2)"/><path d="M9 19.5C9 15.5 12 13 15.5 13S21 15 21 17.5C19 16.5 16 16.5 14 18.5S12 23 15 25C11.5 24.5 9 22.5 9 19.5z" fill="#0b4c8f"/></svg>
<div style="position:absolute;left:440px;top:1070px;width:20px;height:3px;border-radius:2px;background:#9fc9e6"></div>
<svg class="ic" style="left:490px;top:1034.5px;width:30px;height:30.5px" viewBox="0 0 30 30"><defs><clipPath id="ac"><rect width="30" height="30" rx="5.5"/></clipPath></defs><g clip-path="url(#ac)"><rect width="30" height="30" fill="#74d4cf"/><path d="M0 8C4 3 10 2.5 16 2.5s12 2 14 8V22L26 18V30H0z" fill="#d98d45"/><ellipse cx="17.5" cy="17.5" rx="10" ry="10.5" fill="#f3e0cc"/><path d="M6 12C8 6 12 4 17 4S26 6 28 12L26 14C24 10 22 10.5 21 8.5C19 11 15 11.5 12 9.5C11 11.5 9 12.5 7 14z" fill="#de9550"/><ellipse cx="13.5" cy="16" rx="1.3" ry="1.6" fill="#6b4a3a"/><ellipse cx="21" cy="14.5" rx="1.3" ry="1.6" fill="#6b4a3a"/><ellipse cx="7" cy="24" rx="8" ry="5.5" fill="#e9577c"/><path d="M20 30L30 21V30z" fill="#e7d6cc"/><path d="M0 8L4 4V18L0 20z" fill="#b8663a"/></g></svg>
<svg class="ic" style="left:545px;top:1035px;width:30px;height:30px" viewBox="0 0 30 30"><rect width="30" height="30" rx="3" fill="#4b4b4b"/><path d="M6.85 9.44L22.4 5V11.3L16.85 13.15L22.4 15V18.7L6.85 23.9V18.7L12.4 16.85L6.85 15z" fill="#ff9f0a"/></svg>
<div style="position:absolute;left:336.5px;top:1071px;width:7.5px;height:3px;border-radius:2px;background:#8a8a8a"></div>
<div style="position:absolute;left:391px;top:1071px;width:7.5px;height:3px;border-radius:2px;background:#8a8a8a"></div>
<div style="position:absolute;left:501px;top:1071px;width:7.5px;height:3px;border-radius:2px;background:#8a8a8a"></div>
<div style="position:absolute;left:556px;top:1071px;width:7.5px;height:3px;border-radius:2px;background:#8a8a8a"></div>
<svg class="ic" style="left:1608px;top:1044px;width:16px;height:10px" viewBox="0 0 16 10"><path d="M1.5 8.5L8 2L14.5 8.5" fill="none" stroke="#fff" stroke-width="1.8"/></svg>
<svg class="ic" style="left:1645px;top:1040px;width:21px;height:20px" viewBox="0 0 21 20"><rect x="0.5" y="0.5" width="20" height="19" rx="2" fill="#1a9a1a" stroke="#2fd52f" stroke-width="1"/><path d="M5 4v12h11V4h-2v9h-2V8H9v5H7V4z" fill="#0a4d0a"/></svg>
<svg class="ic" style="left:1686px;top:1040px;width:21px;height:21px" viewBox="0 0 21 21"><path d="M9 0.5c3 1.8 6 2.5 8.5 2.7V10c0 5-3.5 8.5-8.5 10.5C4 18.5 0.5 15 0.5 10V3.2C3 3 6 2.3 9 0.5z" fill="#1e88e5"/><path d="M9 0.5c3 1.8 6 2.5 8.5 2.7V10H9z" fill="#4fc3f7"/><circle cx="14.5" cy="15" r="5.7" fill="#1b8a2e" stroke="#1c1c1c" stroke-width="0.8"/><path d="M11.8 15l1.8 1.8 3.4-3.4" fill="none" stroke="#fff" stroke-width="1.4"/></svg>
<svg class="ic" style="left:1725px;top:1041px;width:22px;height:17px" viewBox="0 0 22 17"><path d="M1.5 6.5a13.5 13.5 0 0 1 19 0M4.8 9.8a9 9 0 0 1 12.4 0M8 13a4.5 4.5 0 0 1 6 0" fill="none" stroke="#fff" stroke-width="1.6"/><circle cx="11" cy="15.3" r="1.5" fill="#fff"/></svg>
<svg class="ic" style="left:1755px;top:1041px;width:21px;height:18px" viewBox="0 0 21 18"><path d="M1 6h3.5L9.5 1.5v15L4.5 12H1z" fill="none" stroke="#fff" stroke-width="1.5" stroke-linejoin="round"/><path d="M12.5 6a4 4 0 0 1 0 6" fill="none" stroke="#fff" stroke-width="1.5"/><path d="M15.5 3.5a8 8 0 0 1 0 11M18.2 1.5a11 11 0 0 1 0 15" fill="none" stroke="#777" stroke-width="1.3"/></svg>
<svg class="ic" style="left:1784px;top:1038px;width:24px;height:21px" viewBox="1784 1038 24 21"><rect x="1786.8" y="1044.2" width="16" height="11.6" rx="2.2" fill="none" stroke="#fff" stroke-width="1.6"/><rect x="1789" y="1046.2" width="11.8" height="7.6" rx="0.8" fill="#fff"/><rect x="1803.4" y="1048" width="2.6" height="4.3" rx="0.6" fill="#fff"/><path d="M1789.8 1039.8L1786.3 1046.8H1788.8L1787.3 1051.5L1792 1044.6H1789.6z" fill="#fff" stroke="#1e1e1e" stroke-width="0.9" stroke-linejoin="round"/></svg>
<div class="t" style="left:1842.00px;top:1032.14px;font-size:14.6px;color:#ffffff;">7:55 PM</div>
<div class="t" style="left:1827.00px;top:1052.54px;font-size:14.6px;color:#ffffff;letter-spacing:0.38px;">12/5/2025</div></body></html>
